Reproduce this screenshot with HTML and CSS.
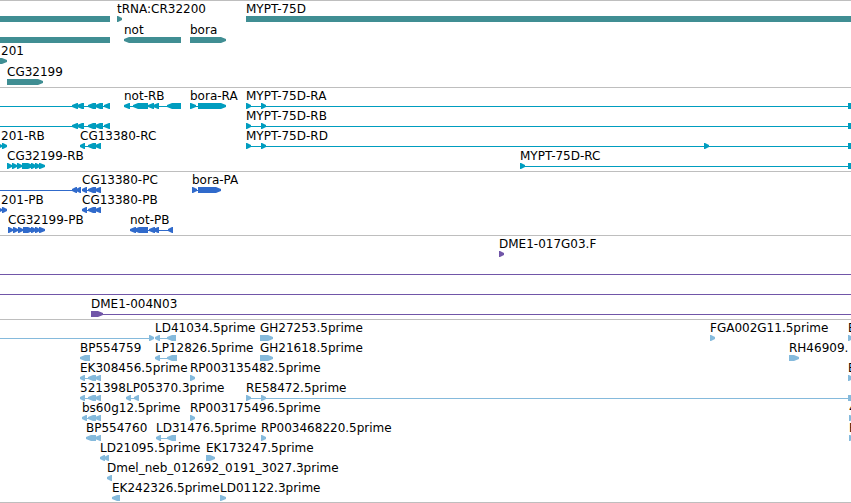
FILE: index.html
```html
<!DOCTYPE html>
<html lang="en">
<head>
<meta charset="utf-8">
<title>Genome region</title>
<link rel="stylesheet" href="styles.css">
</head>
<body>
<main class="browser" id="browser"></main>
<script src="tracks.js"></script>
</body>
</html>
```
FILE: styles.css
```css
body {
  margin: 0;
  background: #fff;
  color: #000;
  font-family: "DejaVu Sans", sans-serif;
  font-size: 12px;
  line-height: 16px;
}

.browser {
  border-bottom: 1px solid #bebebe;
  overflow: hidden;
}

.track {
  border-top: 1px solid #bebebe;
  padding-bottom: 3px;
}

.row {
  position: relative;
  height: 20px;
}

.genes { padding-bottom: 2px; }
.genes .row { height: 21px; }
.track:last-child { padding-bottom: 2px; }

.label {
  position: absolute;
  top: 0;
  white-space: nowrap;
}

.glyphs {
  display: block;
  width: 100%;
  height: 21px;
  fill: currentColor;
}

.genes .glyphs { color: #408e93; }
.transcripts .glyphs { color: #009dbf; }
.proteins .glyphs { color: #306acb; }
.clones .glyphs { color: #7156a8; }
.ests .glyphs { color: #85badc; }
```
FILE: tracks.js
```js
// Feature: [label, start, segments, line]
// Segment: [start, end, direction], direction -1 left, 1 right, 0 plain block.
// Line: [start, end] of the connector between segments.
const END = 4000;
const L = (...pairs) => pairs.map(([a, b]) => [a, b, -1]);
const R = (...pairs) => pairs.map(([a, b]) => [a, b, 1]);

const exons = start => L([start, start + 5], [88, 96], [95, 101]);
const leftArm = ['', 0, L([72, 78], [77, 84], [88, 96], [95, 103], [104, 110]), [0, 110]];
const mypt = (name, extra = []) =>
  [name, 246, [...R([246, 251], [261, 266], ...extra), [848, 851, 0]], [246, 848]];

const tracks = {
  genes: [
    [['', 0, [[0, 110, 0]]], ['tRNA:CR32200', 117, R([117, 122])], ['MYPT-75D', 246, [[246, END, 0]]]],
    [['', 0, [[0, 110, 0]]], ['not', 124, L([124, 181])], ['bora', 190, R([190, 226])]],
    [['201', 1, R([0, 7])]],
    [['CG32199', 7, R([7, 43])]]
  ],
  transcripts: [
    [leftArm, ['not-RB', 124, L([124, 130], [133, 148], [148, 154], [153, 159], [167, 181]), [124, 181]],
      ['bora-RA', 190, R([190, 196], [198, 226]), [190, 226]], mypt('MYPT-75D-RA')],
    [leftArm, mypt('MYPT-75D-RB')],
    [['201-RB', 1, R([-3, 2], [2, 7])], ['CG13380-RC', 80, exons(80), [80, 101]],
      mypt('MYPT-75D-RD', [[704, 709]])],
    [['CG32199-RB', 7, R([7, 12], [12, 17], [17, 22], [22, 33], [31, 36], [35, 40], [39, 45]), [7, 45]],
      ['MYPT-75D-RC', 520, [[520, 525, 1], [848, 851, 0]], [520, 848]]]
  ],
  proteins: [
    [['', 0, L([72, 77], [76, 81]), [0, 81]], ['CG13380-PC', 82, exons(82), [82, 101]],
      ['bora-PA', 192, R([192, 197], [198, 221]), [192, 221]]],
    [['201-PB', 1, R([-3, 2], [2, 7])], ['CG13380-PB', 82, exons(82), [82, 101]]],
    [['CG32199-PB', 8, R([8, 13], [13, 18], [18, 23], [23, 33], [31, 36], [35, 40], [39, 45]), [8, 45]],
      ['not-PB', 130, L([130, 136], [134, 148], [149, 155], [153, 159], [168, 173]), [130, 173]]]
  ],
  clones: [
    [['DME1-017G03.F', 499, R([499, 504])]],
    [['', 0, [], [0, END]]],
    [['', 0, [], [0, END]]],
    [['DME1-004N03', 91, R([91, 103]), [91, END]]]
  ],
  ests: [
    [['', 0, R([149, 154]), [0, 154]], ['LD41034.5prime', 155, L([155, 160], [167, 176]), [155, 176]],
      ['GH27253.5prime', 260, R([260, 273])], ['FGA002G11.5prime', 710, R([710, 715])], ['E', 848, R([848, 853])]],
    [['BP554759', 80, L([80, 90])], ['LP12826.5prime', 155, L([155, 160], [167, 177]), [155, 177]],
      ['GH21618.5prime', 260, R([260, 273])], ['RH46909.', 789, R([789, 799])]],
    [['EK308456.5prime', 80, exons(80), [80, 101]], ['RP003135482.5prime', 190, R([190, 195])],
      ['E', 848, R([848, 853])]],
    [['521398', 80, exons(80), [80, 101]], ['LP05370.3prime', 126, L([126, 131], [134, 139]), [126, 139]],
      ['RE58472.5prime', 246, [[246, 251, 1], [261, 266, 1], [848, 851, 0]], [246, 848]]],
    [['bs60g12.5prime', 82, exons(82), [82, 101]], ['RP003175496.5prime', 190, R([190, 195])],
      ['4', 849, R([849, 854])]],
    [['BP554760', 86, L([86, 96], [95, 101])], ['LD31476.5prime', 156, L([156, 161], [167, 176]), [156, 176]],
      ['RP003468220.5prime', 261, R([261, 266])], ['E', 849, R([849, 854])]],
    [['LD21095.5prime', 100, L([100, 105], [104, 109])], ['EK173247.5prime', 206, R([206, 215])]],
    [['Dmel_neb_012692_0191_3027.3prime', 107, L([107, 112])]],
    [['EK242326.5prime', 112, L([112, 120])], ['LD01122.3prime', 220, R([220, 226])]]
  ]
};

// Heads are stepped: full height at the base, two rows high at the tip.
function segment([a, b, dir]) {
  if (!dir) return `<path d="M${a} 15H${b}V21H${a}Z"/>`;
  const head = Math.min(6, b - a);
  return dir > 0
    ? `<path d="M${a} 15H${b - head + 1}L${b} 17V19L${b - head + 1} 21H${a}Z"/>`
    : `<path d="M${b} 15H${a + head - 1}L${a} 17V19L${a + head - 1} 21H${b}Z"/>`;
}

function row(features) {
  const shapes = features.map(([, , segs, line]) =>
    (line ? `<path d="M${line[0]} 18H${line[1]}V19H${line[0]}Z"/>` : '') + segs.map(segment).join('')).join('');
  const labels = features.filter(f => f[0]).map(([text, x]) =>
    `<span class="label" style="left:${x}px">${text}</span>`).join('');
  return `<div class="row"><svg class="glyphs" aria-hidden="true">${shapes}</svg>${labels}</div>`;
}

document.getElementById('browser').innerHTML = Object.entries(tracks).map(([name, rows]) =>
  `<section class="track ${name}">${rows.map(row).join('')}</section>`).join('');
```
